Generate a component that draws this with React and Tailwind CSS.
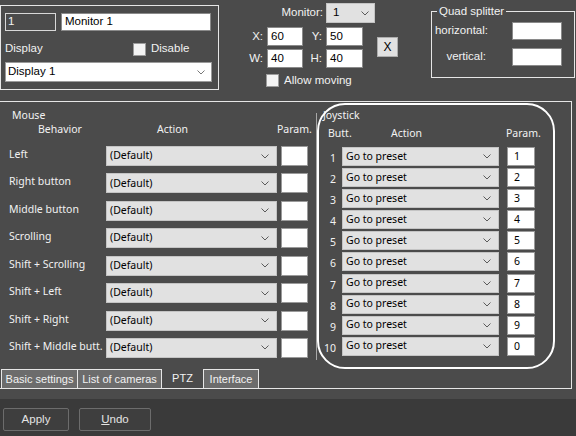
import React from 'react'

const ui = { fontFamily: '"Liberation Sans", Arial, sans-serif' }
const seg = { fontFamily: '"Noto Sans", "Open Sans", sans-serif' }

const mouseRows = [
  'Left',
  'Right button',
  'Middle button',
  'Scrolling',
  'Shift + Scrolling',
  'Shift + Left',
  'Shift + Right',
  'Shift + Middle butt.',
]

const joyRows = [
  ['1', '1'],
  ['2', '2'],
  ['3', '3'],
  ['4', '4'],
  ['5', '5'],
  ['6', '6'],
  ['7', '7'],
  ['8', '8'],
  ['9', '9'],
  ['10', '0'],
]

const Chevron = ({ color = '#5a5a5a' }) => (
  <svg width="8" height="5" viewBox="0 0 8 5" className="shrink-0">
    <polyline points="0.5,0.5 4,4 7.5,0.5" fill="none" stroke={color} strokeWidth="1" />
  </svg>
)

const Check = ({ className = '' }) => (
  <div className={`w-[13px] h-[13px] bg-[#f4f4f4] border border-[#9c9c9c] shrink-0 ${className}`} />
)

const Field = ({ className = '', children }) => (
  <div className={`bg-white border border-[#8a8a8a] text-black flex items-center pl-[3px] ${className}`}>
    {children}
  </div>
)

const Combo = ({ className = '', children, pad = 'pr-[7px]' }) => (
  <div className={`bg-[#e1e1e1] border border-[#c4c4c4] text-black flex items-center justify-between pl-[3px] ${pad} ${className}`}>
    <span>{children}</span>
    <Chevron />
  </div>
)

export default function App() {
  return (
    <div className="w-[576px] h-[436px] bg-[#4b4b4b] text-[#f2f2f2] flex flex-col relative overflow-hidden text-[11px]" style={ui}>
      {/* top area */}
      <div className="h-[101px] flex items-start shrink-0">
        {/* monitor box */}
        <div className="mt-[5px] w-[219px] h-[85px] border border-[#e6e6e6] px-[4px] pt-[7px] flex flex-col text-[11.5px]">
          <div className="flex">
            <div className="w-[51px] h-[18px] border border-[#d8d8d8] flex items-center pl-[2px]">1</div>
            <Field className="ml-[5px] w-[150px] h-[18px]">Monitor 1</Field>
          </div>
          <div className="mt-[11px] h-[14px] flex items-center">
            <span className="w-[128px]">Display</span>
            <Check />
            <span className="ml-[5px]">Disable</span>
          </div>
          <div className="mt-[6px] w-[207px] h-[20px] bg-white border border-[#9a9a9a] text-black flex items-center justify-between pl-[2px] pr-[6px]">
            <span>Display 1</span>
            <Chevron color="#777" />
          </div>
        </div>

        {/* position controls */}
        <div className="w-[212px] flex flex-col pt-[3px] text-[11.5px]">
          <div className="flex items-center h-[20px]">
            <span className="w-[104px] text-right">Monitor:</span>
            <Combo className="ml-[3px] w-[49px] h-[20px]" pad="pr-[5px]">
              <span className="pl-[3px]">1</span>
            </Combo>
          </div>
          <div className="flex mt-[4px]">
            <div className="flex flex-col gap-[3px]">
              <div className="flex items-center h-[19px]">
                <span className="w-[44px] text-right">X:</span>
                <Field className="ml-[4px] w-[36px] h-[19px]">60</Field>
                <span className="w-[19px] text-right">Y:</span>
                <Field className="ml-[4px] w-[37px] h-[19px]">50</Field>
              </div>
              <div className="flex items-center h-[19px]">
                <span className="w-[44px] text-right">W:</span>
                <Field className="ml-[4px] w-[36px] h-[19px]">40</Field>
                <span className="w-[19px] text-right">H:</span>
                <Field className="ml-[4px] w-[37px] h-[19px]">40</Field>
              </div>
            </div>
            <div className="ml-[14px] mt-[10px] w-[21px] h-[20px] bg-[#e1e1e1] border border-[#adadad] text-black flex items-center justify-center text-[12px]">
              X
            </div>
          </div>
          <div className="flex items-center mt-[6px] ml-[47px] h-[13px]">
            <Check />
            <span className="ml-[5px]">Allow moving</span>
          </div>
        </div>

        {/* quad splitter */}
        <div className="mt-[11px] w-[144px] h-[67px] border border-[#e6e6e6] relative pt-[10px] flex flex-col gap-[8px] text-[11.5px]">
          <span className="absolute -top-[8px] left-[5px] bg-[#4b4b4b] px-[2px] leading-[14px]">Quad splitter</span>
          <div className="flex items-center">
            <span className="w-[56px] text-right">horizontal:</span>
            <div className="ml-[24px] w-[50px] h-[18px] bg-white border border-[#8a8a8a]" />
          </div>
          <div className="flex items-center">
            <span className="w-[54px] text-right">vertical:</span>
            <div className="ml-[26px] w-[50px] h-[18px] bg-white border border-[#8a8a8a]" />
          </div>
        </div>
      </div>

      {/* main panel */}
      <div className="w-[572px] h-[288px] border-t border-r border-b border-[#e6e6e6] flex flex-col shrink-0">
        <div className="h-[267px] flex text-[10.5px]" style={seg}>
          {/* mouse */}
          <div className="w-[316px] flex flex-col pt-[6px]">
            <div className="pl-[12px] leading-[14px]">Mouse</div>
            <div className="flex leading-[14px] pl-[38px]">
              <span className="w-[119px]">Behavior</span>
              <span className="w-[120px]">Action</span>
              <span>Param.</span>
            </div>
            <div className="mt-[10px] flex flex-col gap-[7.43px]">
              {mouseRows.map((label) => (
                <div key={label} className="flex h-[20px]">
                  <span className="w-[106px] shrink-0 pl-[9px] leading-[16px] whitespace-nowrap">{label}</span>
                  <Combo className="w-[171px] h-[20px]">(Default)</Combo>
                  <div className="ml-[4px] w-[27px] h-[20px] bg-white border border-[#9a9a9a]" />
                </div>
              ))}
            </div>
          </div>

          <div className="w-px bg-[#a8a8a8] mt-[11px] h-[247px]" />

          {/* joystick */}
          <div className="flex-1 flex flex-col pt-[6px]">
            <div className="pl-[6px] leading-[14px]">Joystick</div>
            <div className="flex leading-[14px] mt-[4px] pl-[11px]">
              <span className="w-[63px]">Butt.</span>
              <span className="w-[115px]">Action</span>
              <span>Param.</span>
            </div>
            <div className="mt-[7px] flex flex-col gap-[2.1px]">
              {joyRows.map(([n, p]) => (
                <div key={n} className="flex h-[19px]">
                  <span className="w-[19px] text-right pt-[4px] leading-[15px]">{n}</span>
                  <Combo className="ml-[6px] w-[157px] h-[19px]">Go to preset</Combo>
                  <div className="ml-[8px] w-[28px] h-[19px] bg-white border border-[#9a9a9a] text-black pl-[6px] leading-[17px]">
                    {p}
                  </div>
                </div>
              ))}
            </div>
          </div>
        </div>

        {/* tabs */}
        <div className="h-[19px] flex items-stretch">
          <div className="ml-[1px] w-[77px] bg-[#6c6c6c] border-t border-l border-r border-[#e6e6e6] flex items-center justify-center">
            Basic settings
          </div>
          <div className="w-[84px] bg-[#6c6c6c] border-t border-r border-[#e6e6e6] flex items-center justify-center">
            List of cameras
          </div>
          <div className="w-[41px] flex items-start justify-center pt-[1px]">PTZ</div>
          <div className="w-[56px] bg-[#6c6c6c] border-t border-l border-r border-[#e6e6e6] flex items-center justify-center">
            Interface
          </div>
        </div>
      </div>

      {/* bottom bar */}
      <div className="mt-[10px] flex-1 bg-[#3a3a3a] flex items-start pt-[9px] pl-[3px] text-[11.5px]">
        <div className="w-[66px] h-[23px] bg-[#3e3e3e] border border-[#6c6c6c] rounded-[2px] flex items-center justify-center text-[#e4e4e4]">
          Apply
        </div>
        <div className="ml-[10px] w-[72px] h-[23px] bg-[#3e3e3e] border border-[#6c6c6c] rounded-[2px] flex items-center justify-center text-[#e4e4e4]">
          <span><span className="underline">U</span>ndo</span>
        </div>
      </div>

      {/* highlight frame */}
      <div className="absolute left-[317px] top-[103px] w-[238px] h-[266px] border-2 border-white rounded-[28px] pointer-events-none" />
    </div>
  )
}
